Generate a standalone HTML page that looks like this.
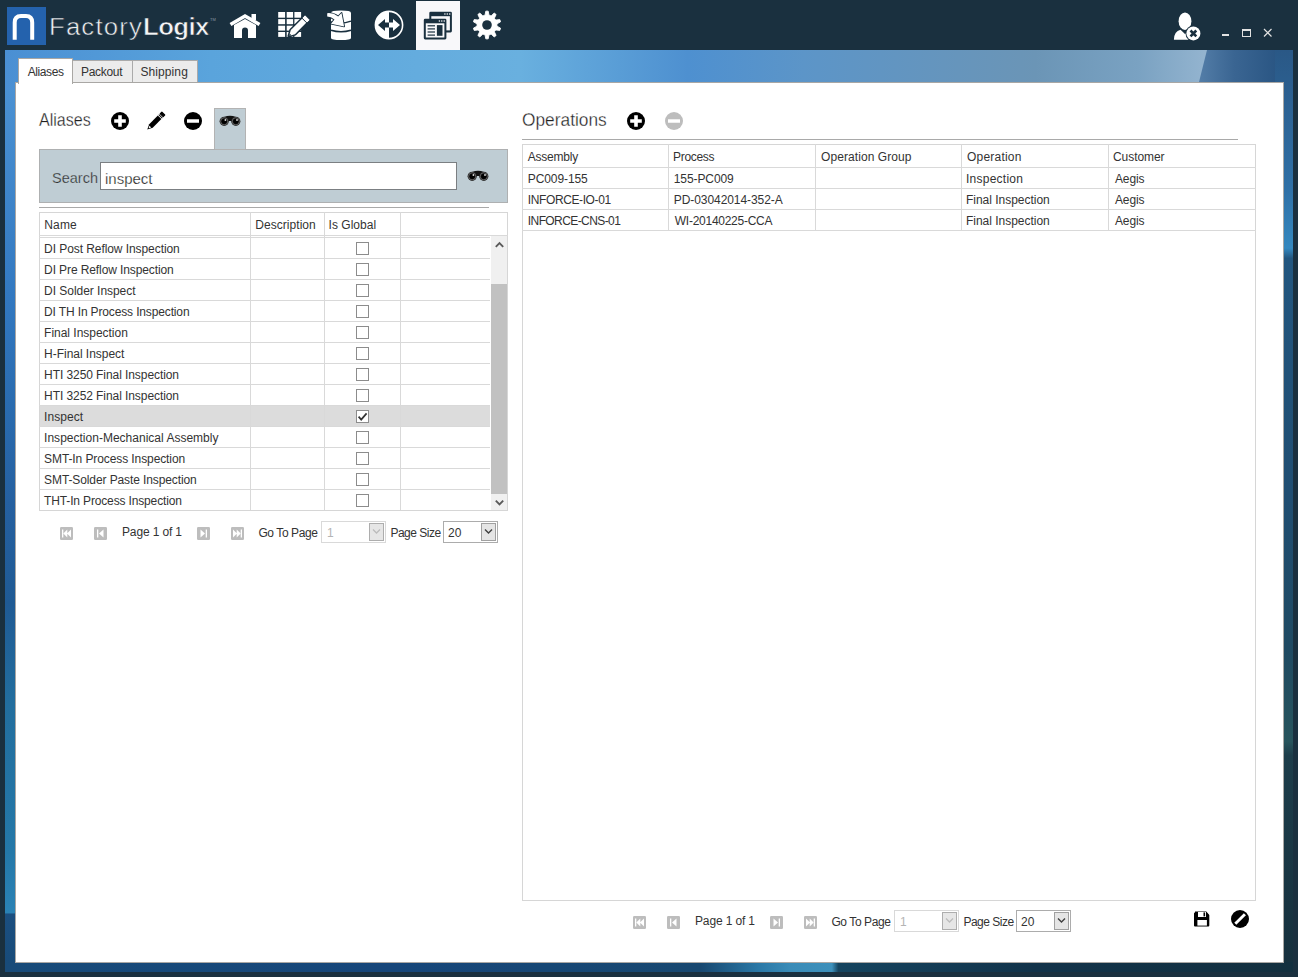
<!DOCTYPE html><html><head><meta charset="utf-8"><style>

html,body{margin:0;padding:0}
body{width:1298px;height:977px;position:relative;overflow:hidden;background:#1a303f;font-family:"Liberation Sans",sans-serif;color:#333}
.ab{position:absolute}
.t{position:absolute;white-space:nowrap;font-size:12px;line-height:14px;color:#333}
.hl{position:absolute;height:1px;background:#d9d9d9}
.vl{position:absolute;width:1px;background:#d9d9d9}
.cb{position:absolute;width:11px;height:11px;border:1px solid #8c8c8c;background:#fff}

</style></head><body>
<div class="ab" style="left:5px;top:50px;width:1288px;height:922px;overflow:hidden;background:linear-gradient(180deg,#4f96d6 0%,#3278c0 27%,#2a6cb0 38%,#2560a0 49%,#1f5a94 60%,#226e9e 71%,#2478a8 87%,#2a82b5 93.6%,#1b4f80 93.7%,#174a78 100%)">
<div class="ab" style="left:0;top:0;width:1288px;height:40px;background:linear-gradient(90deg,#4a8fd3 0%,#5aa4dc 16%,#69b0df 40%,#4e90d0 53%,#5c95c8 62%,#6b95b6 80%,#7aa2c2 88%,#95b5d0 93.5%)"></div>
<div class="ab" style="left:1190px;top:0;width:98px;height:40px;clip-path:polygon(12px 0,98px 0,98px 40px,2px 40px);background:linear-gradient(90deg,#5680aa 0%,#3a6592 40%,#24507e 100%)"></div>
<div class="ab" style="left:1270px;top:0;width:18px;height:922px;background:linear-gradient(180deg,#2a5886 0%,#2f70a6 15%,#3488bf 21.5%,#22567f 22.6%,#204e72 48%,#1f4a62 65%,#27545c 75%,#1d3d4a 76.5%,#16303d 100%)"></div>
<div class="ab" style="left:0;top:912px;width:1288px;height:10px;background:linear-gradient(90deg,#184b79 0%,#16467a 30%,#184870 54%,#2a78a6 58.5%,#3a8cb8 61%,#3d90bb 64.2%,#15445f 64.7%,#12334a 80%,#13303f 100%)"></div>
</div>
<div class="ab" style="left:7px;top:7px;width:39px;height:38px;background:#2462ad"></div>
<svg class="ab" style="left:7px;top:7px" width="39" height="38" viewBox="0 0 39 38"><path d="M7.7 32.8 V15.5 Q7.7 9 14 9 H19 Q25.2 9 25.2 15.5 V32.8" fill="none" stroke="#fff" stroke-width="4"/></svg>
<div class="t" style="left:49px;top:14px;font-size:23px;line-height:26px;color:#eceef0;letter-spacing:1.03px;-webkit-text-stroke:0.5px #1a303f;transform:scaleX(1.12);transform-origin:0 0">Factory<span style="font-weight:bold;-webkit-text-stroke:0.6px #1a303f;letter-spacing:-0.5px;color:#f4f5f6">Logix</span></div>
<div class="t" style="left:210px;top:17px;font-size:4px;line-height:5px;color:#8a99a6">TM</div>
<svg class="ab" style="left:228px;top:12px" width="34" height="28" viewBox="0 0 34 28">
<path d="M2.5 12.5 L17 4 L31.5 12.5" fill="none" stroke="#fff" stroke-width="3.6" stroke-linejoin="miter" stroke-linecap="butt"/>
<rect x="23.5" y="2" width="4.5" height="6" fill="#fff"/>
<path d="M6 13 L17 7 L28 13 V26 H20 V18.5 Q20 15.5 17 15.5 Q14 15.5 14 18.5 V26 H6 Z" fill="#fff"/>
</svg>
<svg class="ab" style="left:276px;top:10px" width="34" height="30" viewBox="0 0 34 30">
<rect x="2.2" y="2" width="6.9" height="5.7" fill="#fff"/>
<rect x="2.2" y="9.1" width="6.9" height="5.1" fill="#fff"/>
<rect x="2.2" y="15.7" width="6.9" height="4.9" fill="#fff"/>
<rect x="2.2" y="22" width="6.9" height="4.9" fill="#fff"/>
<rect x="10.7" y="2" width="6.4" height="5.7" fill="#fff"/>
<rect x="10.7" y="9.1" width="6.4" height="5.1" fill="#fff"/>
<rect x="10.7" y="15.7" width="6.4" height="4.9" fill="#fff"/>
<rect x="10.7" y="22" width="6.4" height="4.9" fill="#fff"/>
<rect x="18.4" y="2" width="6.7" height="5.7" fill="#fff"/>
<rect x="18.4" y="9.1" width="6.7" height="5.1" fill="#fff"/>
<rect x="18.4" y="15.7" width="6.7" height="4.9" fill="#fff"/>
<rect x="18.4" y="22" width="6.7" height="4.9" fill="#fff"/>
<polygon points="13.00,26.00 14.84,20.06 26.15,8.75 30.25,12.85 18.94,24.16" fill="#1a303f" stroke="#1a303f" stroke-width="3" stroke-linejoin="round"/>
<polygon points="26.93,7.97 29.05,5.85 33.15,9.95 31.03,12.07" fill="#1a303f" stroke="#1a303f" stroke-width="3" stroke-linejoin="round"/>
<polygon points="13.00,26.00 14.84,20.06 26.15,8.75 30.25,12.85 18.94,24.16" fill="#fff"/>
<polygon points="26.93,7.97 29.05,5.85 33.15,9.95 31.03,12.07" fill="#fff" stroke="#fff" stroke-width="1" stroke-linejoin="round"/>
<polygon points="13.00,26.00 13.71,23.60 15.40,25.29" fill="#1a303f"/>
</svg>
<svg class="ab" style="left:324px;top:8px" width="32" height="34" viewBox="0 0 32 34">
<path d="M7 12 V30 Q7 32 17 32 Q27 32 27 30 V5 Q27 2.6 17 2.6 Q7 2.6 7 5 Z" fill="#fff"/>
<path d="M7 22.3 Q17 25.3 27 22.3" fill="none" stroke="#1a303f" stroke-width="1.6"/>
<path d="M7 13.8 Q17 16.8 27 13.2" fill="none" stroke="#1a303f" stroke-width="1.4"/>
<path d="M3.2 5.2 Q9 4.5 14.2 8.5 L17.5 5.0 L20.1 18.4 L7.0 15.7 L10.5 11.5 Q7 8.5 3.2 8.5 Z" fill="#1a303f" stroke="#1a303f" stroke-width="1.8" stroke-linejoin="round"/>
<path d="M3.2 5.2 Q9 4.5 14.2 8.5 L17.5 5.0 L20.1 18.4 L7.0 15.7 L10.5 11.5 Q7 8.5 3.2 8.5 Z" fill="#fff"/>
</svg>
<svg class="ab" style="left:374px;top:10px" width="30" height="30" viewBox="0 0 30 30">
<circle cx="15" cy="15" r="13.6" fill="none" stroke="#fff" stroke-width="1.6"/>
<path d="M15 1.2 A13.8 13.8 0 0 0 15 28.8 Z" fill="#fff"/>
<path d="M4 15 L11 9 V12.6 H15 V17.4 H11 V21 Z" fill="#1a303f"/>
<path d="M26 15 L19 9 V12.6 H15 V17.4 H19 V21 Z" fill="#fff"/>
</svg>
<div class="ab" style="left:416px;top:1px;width:44px;height:49px;background:#f8f8fa"></div>
<svg class="ab" style="left:422px;top:10px" width="32" height="31" viewBox="0 0 32 31">
<rect x="7.3" y="1.8" width="22.6" height="20.6" rx="1.3" fill="#1a303f"/>
<rect x="9.3" y="6.2" width="18.6" height="14.2" fill="#f8f8fa"/>
<rect x="1.8" y="8.8" width="22.6" height="20.6" rx="1.3" fill="#1a303f"/>
<rect x="3.8" y="13.3" width="18.6" height="14.2" fill="#f8f8fa"/>
<rect x="5.6" y="15.2" width="7.4" height="1.2" fill="#1a303f"/>
<rect x="5.6" y="18.3" width="7.4" height="1.2" fill="#1a303f"/>
<rect x="5.6" y="21.4" width="7.4" height="1.2" fill="#1a303f"/>
<rect x="5.6" y="24.5" width="7.4" height="1.2" fill="#1a303f"/>
<rect x="14.9" y="15.1" width="5.6" height="10.7" fill="#1a303f"/>
<circle cx="17.4" cy="11" r="0.8" fill="#f8f8fa"/><circle cx="19.8" cy="11" r="0.8" fill="#f8f8fa"/><circle cx="22.2" cy="11" r="0.8" fill="#f8f8fa"/>
<circle cx="22.9" cy="4" r="0.8" fill="#f8f8fa"/><circle cx="25.3" cy="4" r="0.8" fill="#f8f8fa"/><circle cx="27.7" cy="4" r="0.8" fill="#f8f8fa"/>
</svg>
<svg class="ab" style="left:472px;top:10px" width="30" height="30" viewBox="0 0 30 30"><path d="M13.01 5.20 L13.82 1.15 L16.18 1.15 L16.99 5.20 L19.15 5.90 L22.19 3.10 L24.10 4.49 L22.37 8.24 L23.71 10.08 L27.81 9.60 L28.54 11.84 L24.93 13.86 L24.93 16.14 L28.54 18.16 L27.81 20.40 L23.71 19.92 L22.37 21.76 L24.10 25.51 L22.19 26.90 L19.15 24.10 L16.99 24.80 L16.18 28.85 L13.82 28.85 L13.01 24.80 L10.85 24.10 L7.81 26.90 L5.90 25.51 L7.63 21.76 L6.29 19.92 L2.19 20.40 L1.46 18.16 L5.07 16.14 L5.07 13.86 L1.46 11.84 L2.19 9.60 L6.29 10.08 L7.63 8.24 L5.90 4.49 L7.81 3.10 L10.85 5.90 Z" fill="#fff" stroke="#fff" stroke-width="0.9" stroke-linejoin="round"/><circle cx="15" cy="15" r="4.8" fill="#1a303f"/></svg>
<svg class="ab" style="left:1170px;top:10px" width="36" height="32" viewBox="0 0 36 32">
<ellipse cx="15" cy="11.2" rx="6.4" ry="8.7" fill="#fff"/>
<path d="M3.9 29.7 Q4 21.5 10.5 19.8 L15 24 L19.5 20 Q22 21 23 23 L18 29.7 Z" fill="#fff"/>
<circle cx="23.4" cy="23.4" r="7.9" fill="#1a303f"/>
<circle cx="23.4" cy="23.4" r="7" fill="#fff"/>
<path d="M20.5 20.5 L26.3 26.3 M26.3 20.5 L20.5 26.3" stroke="#1a303f" stroke-width="2.6"/>
</svg>
<div class="ab" style="left:1222px;top:34px;width:7px;height:2px;background:#e2e2e2"></div>
<div class="ab" style="left:1242px;top:29px;width:7px;height:5px;border:1px solid #e2e2e2;border-top-width:2px"></div>
<svg class="ab" style="left:1263px;top:28px" width="10" height="10" viewBox="0 0 10 10"><path d="M1 1 L8.5 8.5 M8.5 1 L1 8.5" stroke="#e2e2e2" stroke-width="1.2"/></svg>
<div class="ab" style="left:72px;top:60px;width:59px;height:21px;background:#ececec;border:1px solid #aaa;border-bottom:none"></div>
<div class="ab" style="left:132px;top:60px;width:64px;height:21px;background:#ececec;border:1px solid #aaa;border-bottom:none"></div>
<div class="ab" style="left:15px;top:82px;width:1267px;height:879px;background:#fff;border:1px solid #a9a7a4"></div>
<div class="ab" style="left:18px;top:58px;width:53px;height:25px;background:#fff;border:1px solid #a9a7a4;border-bottom:none"></div>
<div class="t" style="left:27.80px;top:65px;letter-spacing:-0.434px;">Aliases</div>
<div class="t" style="left:81px;top:65px;letter-spacing:-0.3px">Packout</div>
<div class="t" style="left:140.50px;top:65px;letter-spacing:0.086px;">Shipping</div>
<div class="t" style="left:39px;top:110px;font-size:18px;line-height:21px;color:#1e1e1e;transform:scaleX(0.893);transform-origin:0 0;-webkit-text-stroke:0.3px #fff">Aliases</div>
<svg class="ab" style="left:110px;top:111px" width="20" height="20" viewBox="0 0 20 20"><circle cx="10" cy="10" r="9" fill="#000"/><path d="M4.2 10 H15.8 M10 4.2 V15.8" stroke="#fff" stroke-width="3.6"/></svg>
<svg class="ab" style="left:142px;top:108px" width="28" height="26" viewBox="0 0 28 26"><polygon points="5.30,21.60 7.21,16.16 15.84,7.53 19.37,11.06 10.74,19.69" fill="#000"/><polygon points="16.47,6.89 17.11,6.26 20.64,9.79 20.01,10.43" fill="#000"/><polygon points="18.31,5.76 19.87,4.21 22.69,7.03 21.14,8.59" fill="#000" stroke="#000" stroke-width="1.2" stroke-linejoin="round"/><polygon points="6.64,20.26 7.42,17.64 9.26,19.48" fill="#fff"/></svg>
<svg class="ab" style="left:183px;top:111px" width="20" height="20" viewBox="0 0 20 20"><circle cx="10" cy="10" r="9" fill="#000"/><path d="M4 10 H16" stroke="#fff" stroke-width="3.5"/></svg>
<div class="ab" style="left:214px;top:108px;width:30px;height:42px;background:#bfcdd4;border:1px solid #b3b3b3;border-bottom:none"></div>
<div class="ab" style="left:39px;top:149px;width:467px;height:52px;background:#bfcdd4;border:1px solid #aeb0b1"></div>
<div class="ab" style="left:215px;top:149px;width:30px;height:1px;background:#b3b3b3"></div>
<svg class="ab" style="left:219px;top:115px" width="22" height="12" viewBox="0 0 22 12">
<path d="M5 2 Q11 -0.5 17 2 L17 6 L5 6 Z" fill="#111"/>
<circle cx="5.2" cy="6.3" r="4.6" fill="#222"/><circle cx="16.8" cy="6.3" r="4.6" fill="#222"/>
<circle cx="5.2" cy="6.3" r="3.6" fill="none" stroke="#888" stroke-width="0.6"/><circle cx="16.8" cy="6.3" r="3.6" fill="none" stroke="#888" stroke-width="0.6"/>
<circle cx="5.2" cy="6.3" r="2.6" fill="#000"/><circle cx="16.8" cy="6.3" r="2.6" fill="#000"/>
<circle cx="6.4" cy="5" r="0.9" fill="#ddd"/><circle cx="18" cy="5" r="0.9" fill="#ddd"/>
</svg>
<div class="t" style="left:52px;top:170px;font-size:14.5px;line-height:17px;color:#333;-webkit-text-stroke:0.25px #bfcdd4">Search</div>
<div class="ab" style="left:100px;top:162px;width:355px;height:26px;background:#fff;border:1px solid #7b7f82"></div>
<div class="t" style="left:105px;top:170px;font-size:15px;line-height:17px;color:#222;-webkit-text-stroke:0.25px #fff">inspect</div>
<svg class="ab" style="left:467px;top:170px" width="22" height="12" viewBox="0 0 22 12">
<path d="M5 2 Q11 -0.5 17 2 L17 6 L5 6 Z" fill="#111"/>
<circle cx="5.2" cy="6.3" r="4.6" fill="#222"/><circle cx="16.8" cy="6.3" r="4.6" fill="#222"/>
<circle cx="5.2" cy="6.3" r="3.6" fill="none" stroke="#888" stroke-width="0.6"/><circle cx="16.8" cy="6.3" r="3.6" fill="none" stroke="#888" stroke-width="0.6"/>
<circle cx="5.2" cy="6.3" r="2.6" fill="#000"/><circle cx="16.8" cy="6.3" r="2.6" fill="#000"/>
<circle cx="6.4" cy="5" r="0.9" fill="#ddd"/><circle cx="18" cy="5" r="0.9" fill="#ddd"/>
</svg>
<div class="hl" style="left:39px;top:207px;width:450px;background:#a9a9a9"></div>
<div class="ab" style="left:39px;top:212px;width:467px;height:297px;border:1px solid #d6d6d6;background:#fff"></div>
<div class="hl" style="left:39px;top:235px;width:469px"></div>
<div class="hl" style="left:39px;top:237px;width:451px"></div>
<div class="ab" style="left:40px;top:405px;width:450px;height:22px;background:#dcdcdc"></div>
<div class="vl" style="left:250px;top:212px;height:298px"></div>
<div class="vl" style="left:324px;top:212px;height:298px"></div>
<div class="vl" style="left:400px;top:212px;height:298px"></div>
<div class="hl" style="left:39px;top:258px;width:451px"></div>
<div class="t" style="left:44.10px;top:242px;letter-spacing:-0.071px;">DI Post Reflow Inspection</div>
<div class="cb" style="left:356px;top:242px"></div>
<div class="hl" style="left:39px;top:279px;width:451px"></div>
<div class="t" style="left:44.10px;top:263px;letter-spacing:-0.104px;">DI Pre Reflow Inspection</div>
<div class="cb" style="left:356px;top:263px"></div>
<div class="hl" style="left:39px;top:300px;width:451px"></div>
<div class="t" style="left:44.10px;top:284px;letter-spacing:-0.037px;">DI Solder Inspect</div>
<div class="cb" style="left:356px;top:284px"></div>
<div class="hl" style="left:39px;top:321px;width:451px"></div>
<div class="t" style="left:44.10px;top:305px;letter-spacing:-0.142px;">DI TH In Process Inspection</div>
<div class="cb" style="left:356px;top:305px"></div>
<div class="hl" style="left:39px;top:342px;width:451px"></div>
<div class="t" style="left:44.10px;top:326px;letter-spacing:-0.020px;">Final Inspection</div>
<div class="cb" style="left:356px;top:326px"></div>
<div class="hl" style="left:39px;top:363px;width:451px"></div>
<div class="t" style="left:44.10px;top:347px;letter-spacing:-0.029px;">H-Final Inspect</div>
<div class="cb" style="left:356px;top:347px"></div>
<div class="hl" style="left:39px;top:384px;width:451px"></div>
<div class="t" style="left:44.10px;top:368px;letter-spacing:-0.075px;">HTI 3250 Final Inspection</div>
<div class="cb" style="left:356px;top:368px"></div>
<div class="hl" style="left:39px;top:405px;width:451px"></div>
<div class="t" style="left:44.10px;top:389px;letter-spacing:-0.075px;">HTI 3252 Final Inspection</div>
<div class="cb" style="left:356px;top:389px"></div>
<div class="hl" style="left:39px;top:426px;width:451px"></div>
<div class="t" style="left:44.10px;top:410px;letter-spacing:0.050px;">Inspect</div>
<div class="cb" style="left:356px;top:410px"></div>
<svg class="ab" style="left:357px;top:411px" width="11" height="11" viewBox="0 0 11 11"><path d="M1.6 5.6 L4.2 8.6 L9.6 2.4" fill="none" stroke="#333" stroke-width="1.7"/></svg>
<div class="hl" style="left:39px;top:447px;width:451px"></div>
<div class="t" style="left:44.10px;top:431px;letter-spacing:0.010px;">Inspection-Mechanical Assembly</div>
<div class="cb" style="left:356px;top:431px"></div>
<div class="hl" style="left:39px;top:468px;width:451px"></div>
<div class="t" style="left:44.10px;top:452px;letter-spacing:-0.096px;">SMT-In Process Inspection</div>
<div class="cb" style="left:356px;top:452px"></div>
<div class="hl" style="left:39px;top:489px;width:451px"></div>
<div class="t" style="left:44.10px;top:473px;letter-spacing:-0.104px;">SMT-Solder Paste Inspection</div>
<div class="cb" style="left:356px;top:473px"></div>
<div class="t" style="left:44.10px;top:494px;letter-spacing:-0.150px;">THT-In Process Inspection</div>
<div class="cb" style="left:356px;top:494px"></div>
<div class="t" style="left:44.30px;top:218px;letter-spacing:0.133px;">Name</div>
<div class="t" style="left:255.30px;top:218px;letter-spacing:0.040px;">Description</div>
<div class="t" style="left:328.60px;top:218px;letter-spacing:0.012px;">Is Global</div>
<div class="ab" style="left:491px;top:236px;width:16px;height:274px;background:#f0f0f0"></div>
<div class="ab" style="left:491px;top:284px;width:16px;height:210px;background:#c1c1c1"></div>
<svg class="ab" style="left:494px;top:240px" width="11" height="9" viewBox="0 0 11 9"><path d="M1.8 6.8 L5.5 3.1 L9.2 6.8" fill="none" stroke="#5a5a5a" stroke-width="1.9"/></svg>
<svg class="ab" style="left:494px;top:498px" width="11" height="9" viewBox="0 0 11 9"><path d="M1.8 2.7 L5.5 6.4 L9.2 2.7" fill="none" stroke="#5a5a5a" stroke-width="1.9"/></svg>
<svg class="ab" style="left:60px;top:527px" width="13" height="13" viewBox="0 0 13 13"><rect x="0" y="0" width="13" height="13" rx="1.2" fill="#bdbdbd"/><rect x="2" y="2.5" width="1.3" height="8" fill="#fff"/><path d="M3.3 6.5 L7.3 2.5 V10.5 Z M7 6.5 L11 2.5 V10.5 Z" fill="#fff"/></svg><svg class="ab" style="left:94px;top:527px" width="13" height="13" viewBox="0 0 13 13"><rect x="0" y="0" width="13" height="13" rx="1.2" fill="#bdbdbd"/><rect x="3" y="2.5" width="1.3" height="8" fill="#fff"/><path d="M5 6.5 L9.5 2.5 V10.5 Z" fill="#fff"/></svg><svg class="ab" style="left:197px;top:527px" width="13" height="13" viewBox="0 0 13 13"><rect x="0" y="0" width="13" height="13" rx="1.2" fill="#bdbdbd"/><rect x="8.7" y="2.5" width="1.3" height="8" fill="#fff"/><path d="M8 6.5 L3.5 2.5 V10.5 Z" fill="#fff"/></svg><svg class="ab" style="left:231px;top:527px" width="13" height="13" viewBox="0 0 13 13"><rect x="0" y="0" width="13" height="13" rx="1.2" fill="#bdbdbd"/><rect x="9.7" y="2.5" width="1.3" height="8" fill="#fff"/><path d="M9.7 6.5 L5.7 2.5 V10.5 Z M6 6.5 L2 2.5 V10.5 Z" fill="#fff"/></svg><div class="t" style="left:122.00px;top:525px;letter-spacing:-0.140px;">Page 1 of 1</div><div class="t" style="left:258.40px;top:526px;letter-spacing:-0.400px;">Go To Page</div><div class="ab" style="left:321px;top:521px;width:63px;height:20px;border:1px solid #d9d9d9;background:#fff"></div><div class="ab" style="left:369px;top:523px;width:13px;height:16px;border:1px solid #adadad;background:#e6e6e6"></div><svg class="ab" style="left:370px;top:527px" width="13" height="9" viewBox="0 0 13 9"><path d="M3 2.5 L6.5 6 L10 2.5" fill="none" stroke="#bcbcbc" stroke-width="1.3"/></svg><div class="t" style="left:327px;top:526px;color:#b4b4b4">1</div><div class="t" style="left:390.40px;top:526px;letter-spacing:-0.500px;">Page Size</div><div class="ab" style="left:443px;top:521px;width:53px;height:20px;border:1px solid #acacac;background:#fff"></div><div class="ab" style="left:481px;top:523px;width:13px;height:16px;border:1px solid #a0a0a0;background:#e5e5e5"></div><svg class="ab" style="left:482px;top:527px" width="13" height="9" viewBox="0 0 13 9"><path d="M3 2.5 L6.5 6 L10 2.5" fill="none" stroke="#404040" stroke-width="1.4"/></svg><div class="t" style="left:448px;top:526px">20</div>
<div class="t" style="left:522px;top:110px;font-size:18px;line-height:21px;color:#1e1e1e;transform:scaleX(0.962);transform-origin:0 0;-webkit-text-stroke:0.3px #fff">Operations</div>
<svg class="ab" style="left:626px;top:111px" width="20" height="20" viewBox="0 0 20 20"><circle cx="10" cy="10" r="9" fill="#000"/><path d="M4.2 10 H15.8 M10 4.2 V15.8" stroke="#fff" stroke-width="3.6"/></svg>
<svg class="ab" style="left:664px;top:111px" width="20" height="20" viewBox="0 0 20 20"><circle cx="10" cy="10" r="9" fill="#bdbdbd"/><path d="M4 10 H16" stroke="#fff" stroke-width="3.5"/></svg>
<div class="hl" style="left:522px;top:139px;width:716px;background:#a9a9a9"></div>
<div class="ab" style="left:522px;top:144px;width:732px;height:755px;border:1px solid #d6d6d6;background:#fff"></div>
<div class="hl" style="left:522px;top:167px;width:734px"></div>
<div class="hl" style="left:522px;top:188px;width:734px"></div>
<div class="hl" style="left:522px;top:209px;width:734px"></div>
<div class="hl" style="left:522px;top:230px;width:734px"></div>
<div class="vl" style="left:668px;top:144px;height:86px"></div>
<div class="vl" style="left:815px;top:144px;height:86px"></div>
<div class="vl" style="left:961px;top:144px;height:86px"></div>
<div class="vl" style="left:1108px;top:144px;height:86px"></div>
<div class="t" style="left:527.70px;top:150px;letter-spacing:-0.200px;">Assembly</div>
<div class="t" style="left:673.00px;top:150px;letter-spacing:-0.300px;">Process</div>
<div class="t" style="left:821.00px;top:150px;letter-spacing:0.079px;">Operation Group</div>
<div class="t" style="left:967.00px;top:150px;letter-spacing:0.213px;">Operation</div>
<div class="t" style="left:1113.00px;top:150px;letter-spacing:-0.057px;">Customer</div>
<div class="t" style="left:527.80px;top:172px;letter-spacing:-0.100px;">PC009-155</div>
<div class="t" style="left:673.80px;top:172px;letter-spacing:-0.100px;">155-PC009</div>
<div class="t" style="left:966.00px;top:172px;letter-spacing:0.244px;">Inspection</div>
<div class="t" style="left:1114.90px;top:172px;letter-spacing:-0.075px;">Aegis</div>
<div class="t" style="left:527.80px;top:193px;letter-spacing:-0.392px;">INFORCE-IO-01</div>
<div class="t" style="left:673.80px;top:193px;letter-spacing:-0.075px;">PD-03042014-352-A</div>
<div class="t" style="left:966.00px;top:193px;letter-spacing:-0.020px;">Final Inspection</div>
<div class="t" style="left:1114.90px;top:193px;letter-spacing:-0.075px;">Aegis</div>
<div class="t" style="left:527.80px;top:214px;letter-spacing:-0.585px;">INFORCE-CNS-01</div>
<div class="t" style="left:674.80px;top:214px;letter-spacing:-0.264px;">WI-20140225-CCA</div>
<div class="t" style="left:966.00px;top:214px;letter-spacing:-0.020px;">Final Inspection</div>
<div class="t" style="left:1114.90px;top:214px;letter-spacing:-0.075px;">Aegis</div>
<svg class="ab" style="left:633px;top:916px" width="13" height="13" viewBox="0 0 13 13"><rect x="0" y="0" width="13" height="13" rx="1.2" fill="#bdbdbd"/><rect x="2" y="2.5" width="1.3" height="8" fill="#fff"/><path d="M3.3 6.5 L7.3 2.5 V10.5 Z M7 6.5 L11 2.5 V10.5 Z" fill="#fff"/></svg><svg class="ab" style="left:667px;top:916px" width="13" height="13" viewBox="0 0 13 13"><rect x="0" y="0" width="13" height="13" rx="1.2" fill="#bdbdbd"/><rect x="3" y="2.5" width="1.3" height="8" fill="#fff"/><path d="M5 6.5 L9.5 2.5 V10.5 Z" fill="#fff"/></svg><svg class="ab" style="left:770px;top:916px" width="13" height="13" viewBox="0 0 13 13"><rect x="0" y="0" width="13" height="13" rx="1.2" fill="#bdbdbd"/><rect x="8.7" y="2.5" width="1.3" height="8" fill="#fff"/><path d="M8 6.5 L3.5 2.5 V10.5 Z" fill="#fff"/></svg><svg class="ab" style="left:804px;top:916px" width="13" height="13" viewBox="0 0 13 13"><rect x="0" y="0" width="13" height="13" rx="1.2" fill="#bdbdbd"/><rect x="9.7" y="2.5" width="1.3" height="8" fill="#fff"/><path d="M9.7 6.5 L5.7 2.5 V10.5 Z M6 6.5 L2 2.5 V10.5 Z" fill="#fff"/></svg><div class="t" style="left:695.00px;top:914px;letter-spacing:-0.140px;">Page 1 of 1</div><div class="t" style="left:831.40px;top:915px;letter-spacing:-0.400px;">Go To Page</div><div class="ab" style="left:894px;top:910px;width:63px;height:20px;border:1px solid #d9d9d9;background:#fff"></div><div class="ab" style="left:942px;top:912px;width:13px;height:16px;border:1px solid #adadad;background:#e6e6e6"></div><svg class="ab" style="left:943px;top:916px" width="13" height="9" viewBox="0 0 13 9"><path d="M3 2.5 L6.5 6 L10 2.5" fill="none" stroke="#bcbcbc" stroke-width="1.3"/></svg><div class="t" style="left:900px;top:915px;color:#b4b4b4">1</div><div class="t" style="left:963.40px;top:915px;letter-spacing:-0.500px;">Page Size</div><div class="ab" style="left:1016px;top:910px;width:53px;height:20px;border:1px solid #acacac;background:#fff"></div><div class="ab" style="left:1054px;top:912px;width:13px;height:16px;border:1px solid #a0a0a0;background:#e5e5e5"></div><svg class="ab" style="left:1055px;top:916px" width="13" height="9" viewBox="0 0 13 9"><path d="M3 2.5 L6.5 6 L10 2.5" fill="none" stroke="#404040" stroke-width="1.4"/></svg><div class="t" style="left:1021px;top:915px">20</div>
<svg class="ab" style="left:1193px;top:910px" width="18" height="18" viewBox="0 0 18 18">
<path d="M2 2.5 Q1 2.5 1 3.5 V15.5 Q1 16.5 2 16.5 H15.3 Q16.3 16.5 16.3 15.5 V5 L13.3 1.5 H2 Z" fill="#000"/>
<rect x="5" y="2" width="8" height="5" fill="#fff"/><rect x="10.5" y="2.4" width="1.6" height="4" fill="#000"/>
<rect x="4.4" y="10" width="9.5" height="5.6" fill="#fff"/>
</svg>
<svg class="ab" style="left:1230px;top:909px" width="20" height="20" viewBox="0 0 20 20"><circle cx="10" cy="10" r="9" fill="#000"/><path d="M5.3 14.7 L14.9 5.2" stroke="#fff" stroke-width="2.9"/></svg>
</body></html>
